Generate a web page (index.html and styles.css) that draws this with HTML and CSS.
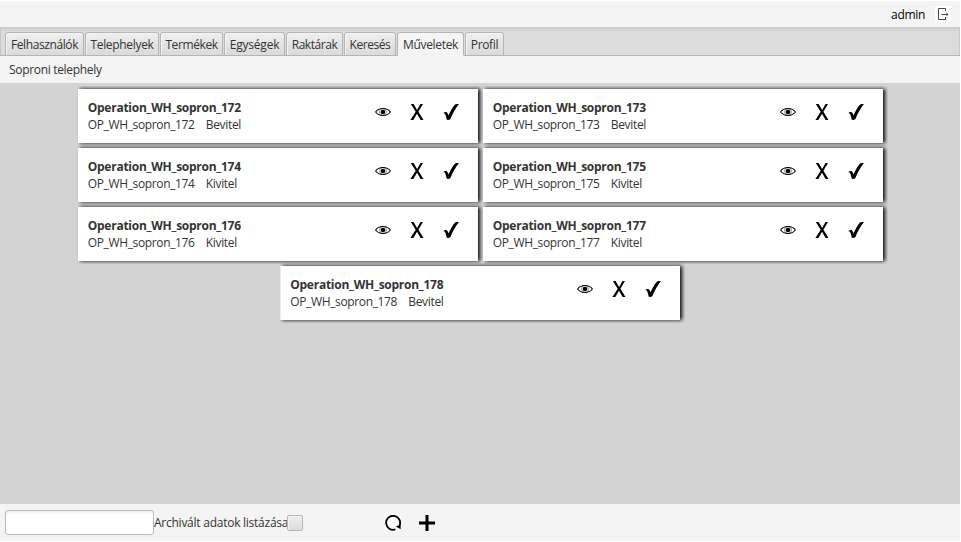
FILE: index.html
```html
<!DOCTYPE html>
<html lang="hu">
<head>
<meta charset="utf-8">
<title>Műveletek</title>
<link rel="stylesheet" href="styles.css">
</head>
<body>
<svg class="defs" width="0" height="0">
  <symbol id="eye" viewBox="0 0 16 16"><path d="M.6 8C4 3.4 12 3.4 15.4 8C12 12.6 4 12.6.6 8Z" fill="none" stroke="#000" stroke-width="1.1"/><circle cx="8" cy="8" r="2.3"/><circle cx="8" cy="8" r="3.5" fill="none" stroke="#000" stroke-width=".4"/></symbol>
  <symbol id="cross" viewBox="0 0 16 16"><path d="M1.8 0H4.6L8.1 5.9L11.5 0H14L9.4 7.8L14.5 16H11.6L8 9.8L4.3 16H1.4L6.7 7.8Z"/></symbol>
  <symbol id="check" viewBox="0 0 16 16"><path d="M.2 9.2C1.4 8 3 7.8 4 8.5C4.7 9.2 5 10.4 5.4 11.4C7.4 7.2 9.4 3.2 12.1.4C13.2 0 14.6 0 15.9.1C12.3 4.8 9.7 9.8 7.3 15.2C6.4 16 4.6 16.1 3.8 15.8C3.2 13.5 2.6 10.7 1.7 9.6C1.2 9.2.7 9.3.2 9.2Z"/></symbol>
</svg>
<div class="app">
  <header class="topbar">
    <span class="user">admin</span>
    <svg class="logout" width="16" height="16" viewBox="0 0 16 16"><path d="M10.5 5V2.5H3.5V13.5H10.5V11M6.5 8.5H13M11.2 6.8L13 8.5L11.2 10.2" fill="none" stroke="#444"/></svg>
  </header>
  <nav class="tabs">
    <div class="tab t1"><span>Felhasználók</span></div>
    <div class="tab t2"><span>Telephelyek</span></div>
    <div class="tab t3"><span>Termékek</span></div>
    <div class="tab t4"><span>Egységek</span></div>
    <div class="tab t5"><span>Raktárak</span></div>
    <div class="tab t6"><span>Keresés</span></div>
    <div class="tab t7 active"><span>Műveletek</span></div>
    <div class="tab t8"><span>Profil</span></div>
  </nav>
  <div class="site"><span>Soproni telephely</span></div>
  <main class="cards">
    <article class="card"><div class="info"><b>Operation_WH_sopron_172</b><p><span class="code">OP_WH_sopron_172</span><span>Bevitel</span></p></div><div class="actions"><svg><use href="#eye"/></svg><svg><use href="#cross"/></svg><svg><use href="#check"/></svg></div></article>
    <article class="card"><div class="info"><b>Operation_WH_sopron_173</b><p><span class="code">OP_WH_sopron_173</span><span>Bevitel</span></p></div><div class="actions"><svg><use href="#eye"/></svg><svg><use href="#cross"/></svg><svg><use href="#check"/></svg></div></article>
    <article class="card"><div class="info"><b>Operation_WH_sopron_174</b><p><span class="code">OP_WH_sopron_174</span><span>Kivitel</span></p></div><div class="actions"><svg><use href="#eye"/></svg><svg><use href="#cross"/></svg><svg><use href="#check"/></svg></div></article>
    <article class="card"><div class="info"><b>Operation_WH_sopron_175</b><p><span class="code">OP_WH_sopron_175</span><span>Kivitel</span></p></div><div class="actions"><svg><use href="#eye"/></svg><svg><use href="#cross"/></svg><svg><use href="#check"/></svg></div></article>
    <article class="card"><div class="info"><b>Operation_WH_sopron_176</b><p><span class="code">OP_WH_sopron_176</span><span>Kivitel</span></p></div><div class="actions"><svg><use href="#eye"/></svg><svg><use href="#cross"/></svg><svg><use href="#check"/></svg></div></article>
    <article class="card"><div class="info"><b>Operation_WH_sopron_177</b><p><span class="code">OP_WH_sopron_177</span><span>Kivitel</span></p></div><div class="actions"><svg><use href="#eye"/></svg><svg><use href="#cross"/></svg><svg><use href="#check"/></svg></div></article>
    <article class="card"><div class="info"><b>Operation_WH_sopron_178</b><p><span class="code">OP_WH_sopron_178</span><span>Bevitel</span></p></div><div class="actions"><svg><use href="#eye"/></svg><svg><use href="#cross"/></svg><svg><use href="#check"/></svg></div></article>
  </main>
  <footer class="bottombar">
    <input class="search" type="text">
    <label class="archive"><span>Archivált adatok listázása</span></label>
    <span class="box"></span>
    <svg class="reload" width="16" height="16" viewBox="0 0 16 16"><rect width="16" height="16" fill="#fff"/><path d="M10.4 14.4A7 7 0 1 1 14.6 10.4" fill="none" stroke="#000" stroke-width="1.8"/><path d="M10.8 11.6L15.6 9.6V14.2Z"/></svg>
    <svg class="add" width="16" height="16" viewBox="0 0 16 16"><path d="M6.5 0H9.5V6.5H16V9.5H9.5V16H6.5V9.5H0V6.5H6.5Z"/></svg>
  </footer>
</div>
</body>
</html>
```

FILE: styles.css
```css
* { box-sizing: border-box; }
body {
  margin: 0;
  background: #fff;
  color: #333;
  font: 12px/16px "Open Sans", "Noto Sans", sans-serif;
  letter-spacing: -0.32px;
  white-space: nowrap;
  overflow: hidden;
}
.defs { position: absolute; }
.app {
  display: flex;
  flex-direction: column;
  width: 960px;
  height: 541px;
  padding-top: 1px;
}
.topbar {
  display: flex;
  height: 26px;
  padding: 5px 9px 0 0;
  justify-content: flex-end;
  background: #f4f4f4;
  color: #000;
}
.user { margin-top: 1px; margin-right: 10px; }
.logout { background: #fff; }
.tabs {
  display: flex;
  gap: 1px;
  height: 29px;
  padding: 5px 4px 0 5px;
  background: linear-gradient(#cbcbcb, #dcdcdc 5px, #dcdcdc);
  box-shadow: inset 0 -1px #b5b5b5, inset 1px 0 #c8c8c8, inset -1px 0 #c8c8c8;
}
.tab {
  height: 24px;
  padding-top: 4px;
  border: 1px solid #b5b5b5;
  border-radius: 3px 3px 0 0;
  background: linear-gradient(#efefef, #dadada);
  box-shadow: inset 1px 1px #f5f5f5;
  text-align: center;
}
.tab.active { background: #f4f4f4; border-bottom-color: #f4f4f4; }
.t1 { width: 79px; letter-spacing: -0.4px; }
.t2 { width: 74px; }
.t3 { width: 63px; letter-spacing: -0.4px; }
.t4 { width: 61px; letter-spacing: -0.2px; }
.t5 { width: 57px; letter-spacing: -0.45px; }
.t6 { width: 52px; letter-spacing: -0.45px; }
.t7 { width: 67px; }
.t8 { width: 39px; }
.site { height: 27px; padding: 6px 9px 0; background: #f4f4f4; }
.cards {
  display: flex;
  flex: 1;
  flex-wrap: wrap;
  align-content: flex-start;
  justify-content: center;
  gap: 5px;
  padding: 6px 0 0 0.5px;
  background: #d3d3d3;
}
.card {
  display: flex;
  justify-content: space-between;
  width: 400px;
  height: 54px;
  padding: 11px 19px 0 10px;
  background: #fff;
  box-shadow: 2px 0 4px #000;
  clip-path: inset(-3px -5px -3px 0);
}
.info b, .info p { display: block; height: 17px; margin: 0; }
.info b { letter-spacing: -0.26px; }
.info p { display: flex; }
.code { width: 118px; letter-spacing: -0.36px; }
.actions { display: flex; gap: 18px; padding-top: 4px; }
.actions svg { width: 16px; height: 16px; }
.bottombar {
  display: flex;
  align-items: center;
  height: 37px;
  padding-left: 5px;
  background: #f4f4f4;
}
.search {
  width: 149px;
  height: 25px;
  border: 1px solid #bababa;
  border-radius: 3px;
  background: linear-gradient(#f0f0f0, #fff 4px);
}
.archive { width: 133px; letter-spacing: -0.25px; }
.box {
  width: 16px;
  height: 16px;
  border: 1px solid #b5b5b5;
  border-radius: 2px;
  background: linear-gradient(#efefef, #dcdcdc);
  box-shadow: inset 1px 1px #f7f7f7;
}
.reload { margin-left: 82px; }
.add { margin-left: 18px; }
```
